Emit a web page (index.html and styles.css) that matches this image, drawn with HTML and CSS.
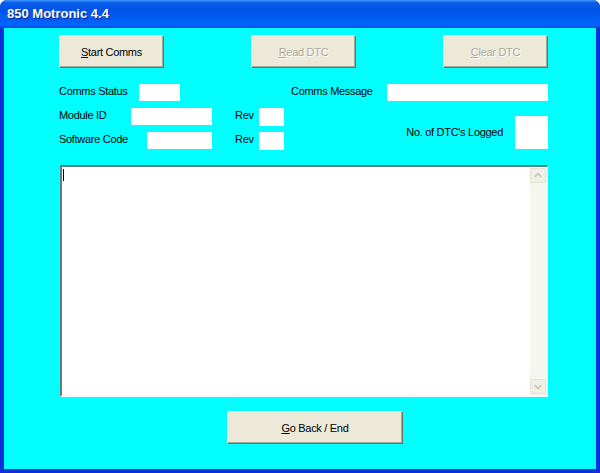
FILE: index.html
```html
<!DOCTYPE html>
<html lang="en">
<head>
    <meta charset="UTF-8">
    <meta name="viewport" content="width=device-width, initial-scale=1.0">
    <title>850 Motronic 4.4</title>
    <link rel="stylesheet" href="styles.css">
</head>
<body>
    <div class="window">
        <div class="titlebar">850 Motronic 4.4</div>
        <div class="client">
            <div class="buttons">
                <button class="btn"><u>S</u>tart Comms</button>
                <button class="btn" disabled><u>R</u>ead DTC</button>
                <button class="btn" disabled><u>C</u>lear DTC</button>
            </div>

            <div class="fields">
                <div class="left">
                    <div class="row">
                        <span class="label status-label">Comms Status</span>
                        <div class="box status-box"></div>
                    </div>
                    <div class="row">
                        <span class="label module-label">Module ID</span>
                        <div class="box module-box"></div>
                        <span class="label rev-label">Rev</span>
                        <div class="box rev-box"></div>
                    </div>
                    <div class="row">
                        <span class="label software-label">Software Code</span>
                        <div class="box software-box"></div>
                        <span class="label rev-label">Rev</span>
                        <div class="box rev-box"></div>
                    </div>
                </div>
                <div class="right">
                    <div class="row">
                        <span class="label message-label">Comms Message</span>
                        <div class="box message-box"></div>
                    </div>
                    <div class="dtc">
                        <span class="label">No. of DTC's Logged</span>
                        <div class="box dtc-box"></div>
                    </div>
                </div>
            </div>

            <div class="output">
                <div class="text"><span class="caret"></span></div>
                <div class="scrollbar">
                    <div class="arrow">
                        <svg width="15" height="15" viewBox="0 0 15 15"><path d="M4 9 L7.5 5.5 L11 9" fill="none" stroke="#c9c7ba" stroke-width="2"/></svg>
                    </div>
                    <div class="track"></div>
                    <div class="arrow">
                        <svg width="15" height="15" viewBox="0 0 15 15"><path d="M4 6 L7.5 9.5 L11 6" fill="none" stroke="#c9c7ba" stroke-width="2"/></svg>
                    </div>
                </div>
            </div>

            <button class="btn back"><u>G</u>o Back / End</button>
        </div>
    </div>
</body>
</html>
```

FILE: styles.css
```css
*{
    margin: 0;
    padding: 0;
    box-sizing: border-box;
}

body{
    width: 600px;
    height: 473px;
    overflow: hidden;
    font-family: "Liberation Sans", Arial, sans-serif;
    font-size: 11px;
    letter-spacing: -0.3px;
}

.window{
    width: 600px;
    height: 473px;
    display: flex;
    flex-direction: column;
    background: #0831d9;
    border-radius: 7px 7px 0 0;
    overflow: hidden;
}

.titlebar{
    height: 28px;
    padding-left: 7px;
    line-height: 27px;
    color: #fff;
    font-weight: bold;
    font-size: 13px;
    letter-spacing: 0;
    text-shadow: 1px 1px #0a1e8a;
    background: linear-gradient(#3d95ff 0%, #0a5ee8 10%, #0054e6 35%, #0060f8 75%, #0066ff 90%, #0046dc 100%);
}

.client{
    flex: 1;
    margin: 0 4px 4px 4px;
    background: #00ffff;
    padding-left: 55px;
    display: flex;
    flex-direction: column;
    align-items: flex-start;
}

/* buttons */
.btn{
    font-family: inherit;
    font-size: 11px;
    letter-spacing: -0.3px;
    color: #000;
    background: #ece9d8;
    border: 1px solid;
    border-color: #fff #716f64 #716f64 #fff;
    box-shadow: inset -1px -1px #aca899;
    height: 33px;
    width: 105px;
}

.btn:disabled{
    color: #aca899;
    text-shadow: 1px 1px #fff;
}

.buttons{
    display: flex;
    gap: 87px;
    margin-top: 7px;
}

/* fields */
.fields{
    display: grid;
    grid-template-columns: 232px 257px;
    margin-top: 16px;
}

.row{
    display: flex;
    align-items: flex-start;
    height: 18px;
}

.left .row + .row{
    margin-top: 6px;
}

.label{
    line-height: 15px;
    color: #000;
}

.box{
    background: #fff;
    height: 17px;
}

.status-label{ width: 80px; }
.status-box{ width: 41px; }

.module-label{ width: 72px; }
.module-box{ width: 81px; }

.software-label{ width: 88px; }
.software-box{ width: 65px; }

.rev-label{
    width: 24px;
    margin-left: 23px;
}
.rev-box{
    width: 25px;
    height: 18px;
}

.message-label{ width: 96px; }
.message-box{ width: 161px; }

.dtc{
    display: flex;
    align-items: center;
    justify-content: flex-end;
    gap: 12px;
    margin-top: 14px;
}

.dtc-box{
    width: 33px;
    height: 33px;
}

/* output area */
.output{
    display: flex;
    width: 488px;
    height: 232px;
    margin-top: 15px;
    margin-left: 1px;
    background: #fff;
    border-top: 2px solid #5f7f7f;
    border-left: 2px solid #5f7f7f;
    border-right: 1px solid #d4f0f0;
    border-bottom: 2px solid #e8fafa;
}

.text{
    flex: 1;
    padding: 2px 0 0 1px;
}

.caret{
    display: block;
    width: 1px;
    height: 12px;
    background: #000;
}

.scrollbar{
    width: 17px;
    display: flex;
    flex-direction: column;
    background: #f6f5ef;
    padding: 1px 1px 1px 0;
}

.arrow{
    height: 15px;
    background: #f1efe6;
    border: 1px solid #e4e1d4;
    border-radius: 2px;
    display: flex;
    align-items: center;
    justify-content: center;
}

.track{
    flex: 1;
}

.back{
    width: 176px;
    margin-top: 14px;
    margin-left: 168px;
}
```
